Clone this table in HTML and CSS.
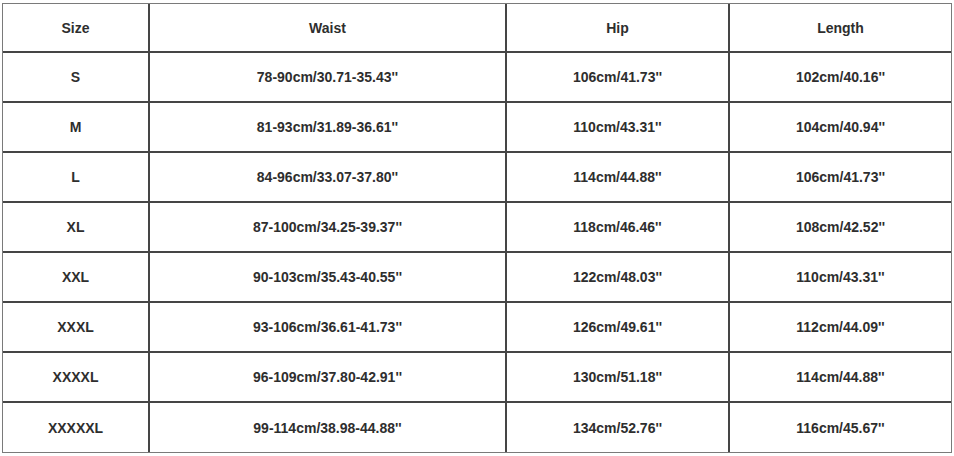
FILE: index.html
```html
<!DOCTYPE html>
<html>
<head>
<meta charset="utf-8">
<link rel="stylesheet" href="styles.css">
</head>
<body>
<table class="size-table">
  <colgroup>
    <col class="c1"><col class="c2"><col class="c3"><col class="c4">
  </colgroup>
  <thead>
    <tr class="head"><th>Size</th><th>Waist</th><th>Hip</th><th>Length</th></tr>
  </thead>
  <tbody>
    <tr><td>S</td><td>78-90cm/30.71-35.43''</td><td>106cm/41.73''</td><td>102cm/40.16''</td></tr>
    <tr><td>M</td><td>81-93cm/31.89-36.61''</td><td>110cm/43.31''</td><td>104cm/40.94''</td></tr>
    <tr><td>L</td><td>84-96cm/33.07-37.80''</td><td>114cm/44.88''</td><td>106cm/41.73''</td></tr>
    <tr><td>XL</td><td>87-100cm/34.25-39.37''</td><td>118cm/46.46''</td><td>108cm/42.52''</td></tr>
    <tr><td>XXL</td><td>90-103cm/35.43-40.55''</td><td>122cm/48.03''</td><td>110cm/43.31''</td></tr>
    <tr><td>XXXL</td><td>93-106cm/36.61-41.73''</td><td>126cm/49.61''</td><td>112cm/44.09''</td></tr>
    <tr><td>XXXXL</td><td>96-109cm/37.80-42.91''</td><td>130cm/51.18''</td><td>114cm/44.88''</td></tr>
    <tr class="last"><td>XXXXXL</td><td>99-114cm/38.98-44.88''</td><td>134cm/52.76''</td><td>116cm/45.67''</td></tr>
  </tbody>
</table>
</body>
</html>
```
FILE: styles.css
```css
html, body {
  margin: 0;
  padding: 0;
  background: #ffffff;
}
body {
  padding: 3px 0 0 2px;
}
.size-table {
  border-collapse: separate;
  border-spacing: 0;
  table-layout: fixed;
  width: 950px;
  border: 1px solid #7a7a7a;
  font-family: "Liberation Sans", Arial, sans-serif;
  font-size: 14px;
  font-weight: bold;
  color: #2e2e2e;
}
.c1 { width: 147px; }
.c2 { width: 357px; }
.c3 { width: 223px; }
.c4 { width: 221px; }
.size-table th,
.size-table td {
  box-sizing: border-box;
  padding: 0;
  text-align: center;
  vertical-align: middle;
  height: 50px;
  border-right: 2px solid #454545;
  border-bottom: 2px solid #454545;
  font-weight: bold;
}
.size-table .head th {
  height: 49px;
}
.size-table th:last-child,
.size-table td:last-child {
  border-right: none;
}
.size-table .last td {
  border-bottom: none;
  height: 49px;
}
```
